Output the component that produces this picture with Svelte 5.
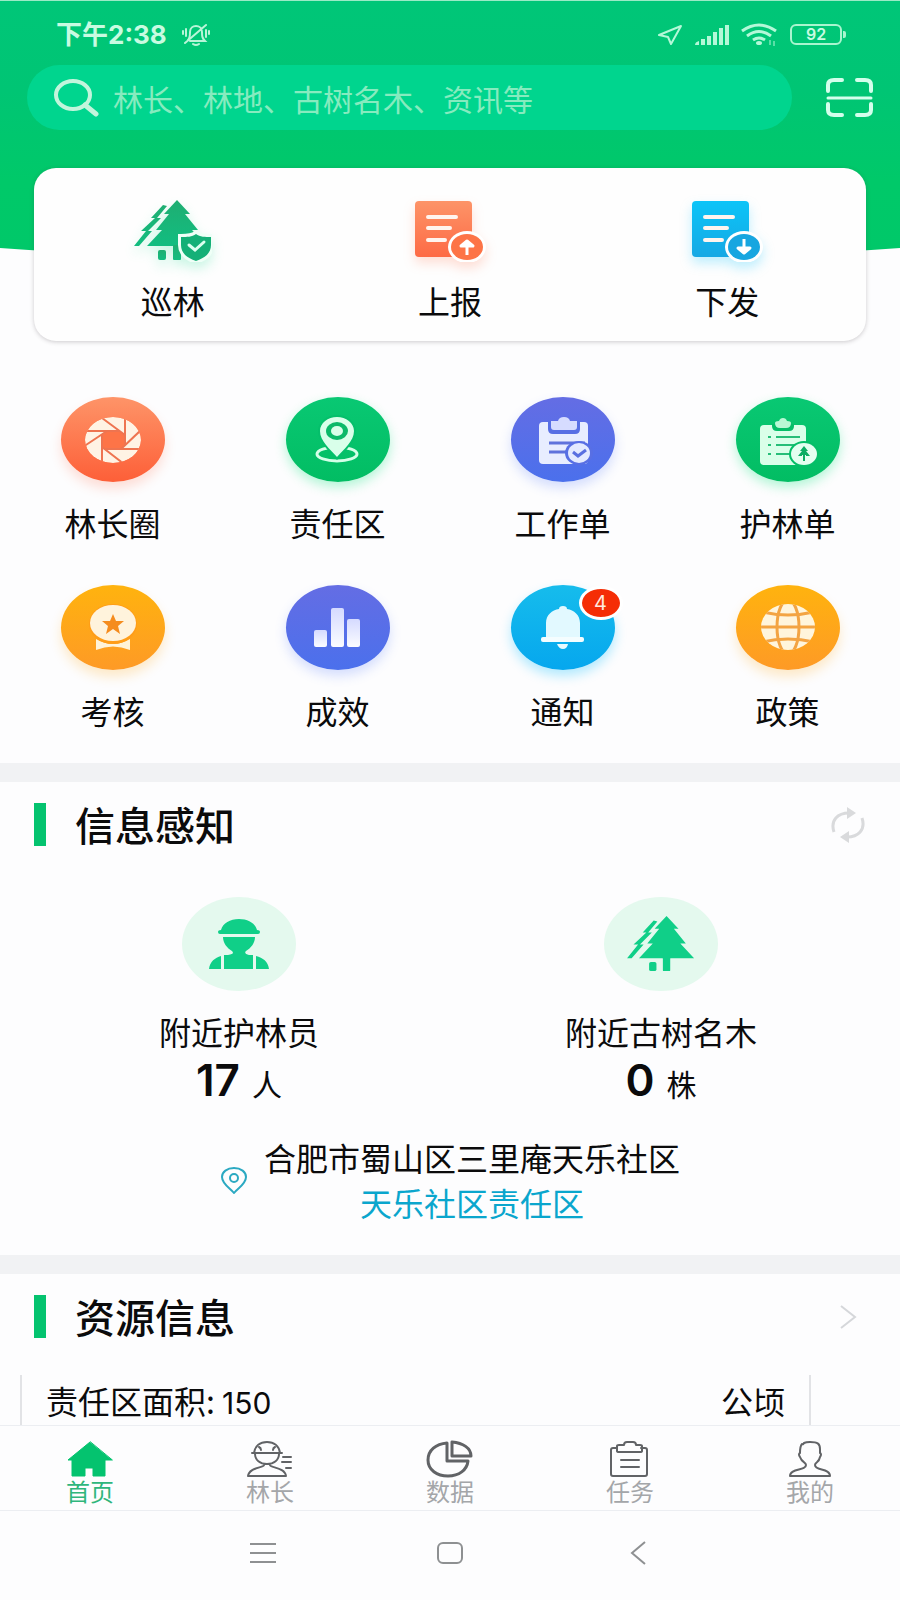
<script>
  const actions = [
    { id: 'patrol', label: '巡林' },
    { id: 'report', label: '上报' },
    { id: 'dispatch', label: '下发' }
  ];
  const services = [
    { id: 'circle', label: '林长圈', tone: 'coral' },
    { id: 'area', label: '责任区', tone: 'green' },
    { id: 'work', label: '工作单', tone: 'indigo' },
    { id: 'forest', label: '护林单', tone: 'green' },
    { id: 'assess', label: '考核', tone: 'amber' },
    { id: 'result', label: '成效', tone: 'indigo' },
    { id: 'notice', label: '通知', tone: 'blue', badge: 4 },
    { id: 'policy', label: '政策', tone: 'amber' }
  ];
  const stats = [
    { id: 'ranger', label: '附近护林员', value: 17, unit: '人' },
    { id: 'trees', label: '附近古树名木', value: 0, unit: '株' }
  ];
  const tabs = [
    { id: 'home', label: '首页', active: true },
    { id: 'chief', label: '林长' },
    { id: 'data', label: '数据' },
    { id: 'task', label: '任务' },
    { id: 'mine', label: '我的' }
  ];
</script>

{#snippet pines()}
  <path d="M29 5 17 18h4L7 31h5L0 46h5L18 31h-4L27 18h-4L33 6z" />
  <path d="M43 0 30 14h5L22 30h6L13 46h60L58 30h6L51 14h5z" />
  <rect x="24" y="50" width="8" height="10" rx="2" />
  <rect x="39" y="45" width="8" height="15" rx="1" />
{/snippet}

{#snippet actionIcon(id)}
  {#if id === 'patrol'}
    <svg class="glow-green" width="78" height="62" viewBox="0 0 78 62" aria-hidden="true">
      <defs>
        <linearGradient id="gPine" x1="0" y1="0" x2="0" y2="1">
          <stop offset="0" stop-color="#1fae72" /><stop offset="1" stop-color="#12bd80" />
        </linearGradient>
      </defs>
      <g fill="url(#gPine)">{@render pines()}</g>
      <path d="M62 34c4 3 9 3 15 3v8c0 8-6 13-15 16-9-3-15-8-15-16v-8c6 0 11 0 15-3z" fill="#14b077" stroke="#effff7" stroke-width="6" paint-order="stroke" />
      <path d="m55 45 6 5 9-8" fill="none" stroke="#dcfff0" stroke-width="3" stroke-linecap="round" />
    </svg>
  {:else}
    <svg class={id === 'report' ? 'glow-coral' : 'glow-blue'} width="72" height="62" viewBox="0 0 72 62" aria-hidden="true">
      <defs>
        <linearGradient id="gDoc-{id}" x1="0" y1="0" x2="0" y2="1">
          <stop offset="0" stop-color={id === 'report' ? '#fd9468' : '#0cc4f8'} />
          <stop offset="1" stop-color={id === 'report' ? '#fd6a45' : '#16a8e4'} />
        </linearGradient>
      </defs>
      <rect x="1" y="1" width="57" height="56" rx="4" fill="url(#gDoc-{id})" />
      <path d="M14 17h28M14 28h22M14 40h17" stroke="#fff4ee" stroke-width="4" stroke-linecap="round" />
      <ellipse cx="53" cy="47" rx="19" ry="16" fill="#fff" />
      <ellipse cx="53" cy="47" rx="16" ry="13" fill={id === 'report' ? '#fd7447' : '#17a6e0'} />
      {#if id === 'report'}
        <path d="M53 41v14M47 46l6-5 6 5z" fill="#fff" stroke="#fff" stroke-width="3" stroke-linejoin="round" />
      {:else}
        <path d="M53 39v14M47 48l6 5 6-5z" fill="#fff" stroke="#fff" stroke-width="3" stroke-linejoin="round" />
      {/if}
    </svg>
  {/if}
{/snippet}

{#snippet serviceIcon(id)}
  <svg width="104" height="85" viewBox="0 0 104 85" aria-hidden="true">
    {#if id === 'circle'}
      <clipPath id="lens"><ellipse cx="52" cy="43" rx="28" ry="23" /></clipPath>
      <g clip-path="url(#lens)">
        <ellipse cx="52" cy="43" rx="28" ry="23" fill="#fff3e4" />
        <path d="M46 34h12l6 4v10l-4 4H44l-3-2V38z" fill="#fd7447" />
        <path d="m41 21 23 17M64 18v30M80 33 60 52M82 52H44M63 67 41 50M41 68V38M22 50l24-16M22 34h36" fill="none" stroke="#ee7450" stroke-width="2" />
      </g>
    {:else if id === 'area'}
      <ellipse cx="51" cy="57" rx="20" ry="7" fill="none" stroke="#d4ffe8" stroke-width="3" />
      <path d="M51 60C44 52 34 44 34 34c0-8 8-14 17-14s17 6 17 14c0 10-10 18-17 26z" fill="#d9ffea" stroke="#05bf6b" stroke-width="4" paint-order="stroke" />
      <ellipse cx="51" cy="34" rx="11" ry="9" fill="#0bb969" />
      <ellipse cx="51" cy="34" rx="6" ry="5" fill="#d9ffea" />
    {:else if id === 'work'}
      <rect x="28" y="25" width="49" height="42" rx="4" fill="#e8edff" />
      <path d="M37 24v8q0 5 5 5h22q5 0 5-5v-8z" fill="#586fe4" />
      <path d="M40 24h7q1-4 6-4t6 4h7v6q0 3-3 3H43q-3 0-3-3z" fill="#d6dcff" />
      <path d="M38 46h36M38 55h22" stroke="#5f72dc" stroke-width="3" />
      <ellipse cx="68" cy="56" rx="14" ry="12" fill="#586fe4" />
      <ellipse cx="68" cy="56" rx="11" ry="10" fill="#e4eaff" />
      <path d="m62 55 5 4 8-6" fill="none" stroke="#5a70e0" stroke-width="3" />
    {:else if id === 'forest'}
      <rect x="24" y="28" width="46" height="40" rx="4" fill="#daffe9" />
      <path d="M36 27h22v2q0 5-5 5H41q-5 0-5-5z" fill="#05be68" />
      <path d="M39 26q0-2 4-2 1-3 4-3t4 3q4 0 4 2 0 5-5 5h-6q-5 0-5-5z" fill="#b9f8d5" />
      <path d="M40 40h24M40 48h20M40 57h14M32 40h3M32 48h3M32 57h3" stroke="#27be78" stroke-width="2" />
      <ellipse cx="68" cy="57" rx="15" ry="13" fill="#05be68" />
      <ellipse cx="68" cy="57" rx="13" ry="11" fill="#e4fff0" />
      <path d="m68 49-4 5h2l-4 5h4v-1h1v6h2v-6h1v1h4l-4-5h2z" fill="#0cad63" />
    {:else if id === 'assess'}
      <path d="M35 54q17 10 34 0v11q-17-7-34 0z" fill="#fff3d8" />
      <ellipse cx="52" cy="39" rx="24" ry="20" fill="#ff9d18" />
      <ellipse cx="52" cy="38" rx="23" ry="18" fill="#fff3dc" />
      <path d="m52 29 3 7h8l-6 5 2 8-7-5-7 5 2-8-6-5h8z" fill="#f58c1e" />
    {:else if id === 'result'}
      <defs>
        <linearGradient id="gBar" x1="0" y1="0" x2="0" y2="1">
          <stop offset="0" stop-color="#d5daff" /><stop offset="1" stop-color="#fbfcff" />
        </linearGradient>
      </defs>
      <g fill="url(#gBar)">
        <rect x="28" y="45" width="13" height="17" rx="2" />
        <rect x="45" y="23" width="13" height="39" rx="2" />
        <rect x="61" y="34" width="13" height="28" rx="2" />
      </g>
    {:else if id === 'notice'}
      <path d="M35 53V38c0-8 6-13 13-14q0-3 4-3t4 3c7 1 13 6 13 14v15z" fill="#e2f9ff" />
      <rect x="30" y="52" width="43" height="5" rx="2" fill="#f4fdff" />
      <path d="M46 59h11q-1 5-5 5t-6-5z" fill="#e8fbff" />
    {:else if id === 'policy'}
      <clipPath id="globe"><ellipse cx="52" cy="42" rx="27" ry="23" /></clipPath>
      <ellipse cx="52" cy="42" rx="27" ry="23" fill="#fff5dc" />
      <g fill="none" stroke="#f3a443" stroke-width="3" clip-path="url(#globe)">
        <ellipse cx="52" cy="42" rx="11" ry="27" />
        <path d="M24 42h56M26 27q26 6 52 0M26 57q26-6 52 0" />
      </g>
    {/if}
  </svg>
{/snippet}

{#snippet tabIcon(id)}
  <svg width="50" height="40" viewBox="0 0 50 40" fill="none" stroke="#616366" stroke-width="2" stroke-linejoin="round" stroke-linecap="round" aria-hidden="true">
    {#if id === 'home'}
      <path d="M25 2 3 20h4v16h13v-8h8v8h12V20h7z" fill="#04c36f" stroke="#04c36f" stroke-width="1" />
    {:else if id === 'chief'}
      <path d="M9 13C10 6 15 2 22 2s12 4 13 11M7 13h30M14 7q2 1 2 3M30 7q-2 1-2 3M10 14c0 6 5 10 12 10s12-4 12-10M19 25c0 3-15 2-16 11h38c-1-9-16-8-16-11M38 17h8M37 22h9M41 28h5" />
    {:else if id === 'data'}
      <path d="M22 3C11 4 3 10 3 20s9 16 20 16 19-6 20-15H22zM27 2v14h19C46 8 38 3 27 2z" stroke-width="3" />
    {:else if id === 'task'}
      <path d="M12 8H8q-2 0-2 2v24q0 2 2 2h32q2 0 2-2V10q0-2-2-2h-4M16 20h18M16 27h18" />
      <path d="M12 11V6q0-1 2-1h5q0-3 3-3h6q3 0 3 3h4q2 0 2 1v5q0 1-2 1H14q-2 0-2-1z" />
    {:else}
      <path d="M17 4q1 1 2-1 2-1 6-1c8 0 10 2 10 7v4q2 1 0 4c-1 6-5 5-5 8 0 6 15 3 15 11H5c0-8 16-5 16-11 0-3-4-2-6-8q-2-3 0-4C15 9 15 6 17 4z" />
    {/if}
  </svg>
{/snippet}

<div class="page">
  <header>
    <div class="status">
      <span class="time">下午2:38</span>
      <svg width="30" height="24" viewBox="0 0 30 24" fill="none" stroke="#b8f5d8" stroke-width="2" stroke-linecap="round" aria-hidden="true">
        <path d="M7 17c2-2 2-4 2-8 0-4 3-6 6-6s6 2 6 6c0 4 0 6 3 9H9M12 21q3 2 6 0M4 20 25 2M5 6v7M2 8v3M25 7v7M28 8v3" />
      </svg>
      <span class="spacer"></span>
      <div class="signals">
        <svg width="26" height="22" viewBox="0 0 26 22" fill="none" stroke="#b4f8d8" stroke-width="2" stroke-linejoin="round" aria-hidden="true">
          <path d="M24 2 2 11l9 2 3 7z" />
        </svg>
        <svg width="34" height="22" viewBox="0 0 34 22" fill="#b4f8d8" aria-hidden="true">
          <path d="M0 21q0-3 4-4v4zM6 15h4v6H6zM12 12h4v9h-4zM18 8h4v13h-4zM24 4h4v17h-4zM30 1h4v20h-4z" />
        </svg>
        <svg width="36" height="24" viewBox="0 0 36 24" fill="none" stroke="#b4f8d8" stroke-width="3" aria-hidden="true">
          <path d="M1 8q17-12 34 0M6 13q12-9 24 0M12 17q6-4 12 0" />
          <ellipse cx="18" cy="20" rx="3" ry="2" fill="#b4f8d8" stroke="none" />
          <path d="M29 17v5M33 18v5" stroke-width="1" />
        </svg>
        <span class="battery">92</span>
      </div>
    </div>
    <div class="search-row">
      <label class="search">
        <svg width="46" height="40" viewBox="0 0 46 40" fill="none" stroke="#c2f5dc" aria-hidden="true">
          <ellipse cx="20" cy="17" rx="17" ry="14" stroke-width="4" />
          <path d="m32 27 11 9" stroke-width="5" stroke-linecap="round" />
        </svg>
        <input type="search" aria-label="搜索" placeholder="林长、林地、古树名木、资讯等" />
      </label>
      <button aria-label="扫一扫">
        <svg width="47" height="40" viewBox="0 0 47 40" fill="none" stroke="#d3ffec" stroke-width="4" stroke-linecap="round" aria-hidden="true">
          <path d="M2 13V7q0-5 6-5h8M31 2h8q6 0 6 5v6M2 26v6q0 5 6 5h8M31 37h8q6 0 6-5v-6" />
          <path d="M2 20h43" stroke-width="3" />
        </svg>
      </button>
    </div>
  </header>

  <main>
    <section class="actions">
      {#each actions as a}
        <button>
          {@render actionIcon(a.id)}
          <span>{a.label}</span>
        </button>
      {/each}
    </section>

    <section class="services">
      {#each services as s}
        <button>
          <span class="disc {s.tone}">
            {@render serviceIcon(s.id)}
            {#if s.badge}<span class="badge">{s.badge}</span>{/if}
          </span>
          <span>{s.label}</span>
        </button>
      {/each}
    </section>

    <section class="block">
      <div class="heading">
        <h2>信息感知</h2>
        <button aria-label="刷新">
          <svg width="36" height="36" viewBox="0 0 36 36" fill="none" stroke="#d9dadc" stroke-width="3" aria-hidden="true">
            <path d="M4 25C0 13 8 6 19 6M32 11c4 12-4 19-15 19" />
            <path d="m17 0 9 6-9 6zM19 24l-9 6 9 6z" fill="#d9dadc" stroke="none" />
          </svg>
        </button>
      </div>
      <div class="stats">
        {#each stats as s}
          <div class="stat">
            <span class="halo">
              {#if s.id === 'ranger'}
                <svg width="60" height="50" viewBox="0 0 60 50" fill="#10cf88" aria-hidden="true">
                  <path d="M12 11C14 4 21 0 30 0s16 4 18 11q3 0 3 2t-2 2H11q-2 0-2-2t3-2zM14 18h32c0 6-4 11-9 14-2 2 0 3 3 4h4v14H15V36h4c5-1 6-2 4-4-5-3-9-8-9-14zM12 37v13H0c1-8 6-11 12-13zM47 37c7 2 12 5 13 13H47V37z" />
                </svg>
              {:else}
                <svg width="69" height="56" viewBox="0 0 75 61" fill="#10cf88" aria-hidden="true">{@render pines()}</svg>
              {/if}
            </span>
            <span>{s.label}</span>
            <div class="figure"><strong>{s.value}</strong><span>{s.unit}</span></div>
          </div>
        {/each}
      </div>
      <div class="place">
        <svg width="28" height="28" viewBox="0 0 28 28" fill="none" stroke="#2ba9c2" stroke-width="2" stroke-linejoin="round" aria-hidden="true">
          <path d="M14 27C10 22 2 18 2 11c0-5 5-9 12-9s12 4 12 9c0 7-8 11-12 16z" />
          <circle cx="14" cy="12" r="4" />
        </svg>
        <div class="address">
          <span>合肥市蜀山区三里庵天乐社区</span>
          <a href="#area">天乐社区责任区</a>
        </div>
      </div>
    </section>

    <section class="block">
      <div class="heading">
        <h2>资源信息</h2>
        <button class="more" aria-label="更多">
          <svg width="18" height="26" viewBox="0 0 18 26" fill="none" stroke="#d5d7da" stroke-width="2" aria-hidden="true">
            <path d="m2 2 14 11L2 24" />
          </svg>
        </button>
      </div>
      <div class="resource">
        <span>责任区面积: <span class="number">150</span></span>
        <span>公顷</span>
      </div>
    </section>
  </main>

  <nav class="tabs">
    {#each tabs as t}
      <a href="#{t.id}" class:active={t.active}>
        {@render tabIcon(t.id)}
        <span>{t.label}</span>
      </a>
    {/each}
  </nav>

  <div class="system">
    <button aria-label="菜单">
      <svg width="26" height="22" viewBox="0 0 26 22" stroke="#8e9092" stroke-width="2" aria-hidden="true"><path d="M0 2h26M0 11h26M0 20h26" /></svg>
    </button>
    <button aria-label="主屏幕">
      <svg width="28" height="24" viewBox="0 0 28 24" fill="none" stroke="#8e9092" stroke-width="2" aria-hidden="true"><rect x="2" y="2" width="24" height="20" rx="5" /></svg>
    </button>
    <button aria-label="返回">
      <svg width="26" height="24" viewBox="0 0 26 24" fill="none" stroke="#8e9092" stroke-width="2" aria-hidden="true"><path d="M21 1 8 12l13 11" /></svg>
    </button>
  </div>
</div>

<style>
  :global(body) {
    margin: 0;
    background: #fdfdfe;
  }
  .page {
    display: flex;
    flex-direction: column;
    min-height: 100vh;
    font-family: 'Noto Sans CJK SC', sans-serif;
    font-size: 32px;
    line-height: 36px;
    color: #0b0b0c;
    background: #fdfdfe;
  }
  button {
    margin: 0;
    padding: 0;
    border: 0;
    background: none;
    font: inherit;
    color: inherit;
  }
  a {
    text-decoration: none;
  }
  svg {
    display: block;
    flex: none;
  }

  header {
    box-sizing: border-box;
    height: 263px;
    border-top: 1px solid #9beac6;
    background: linear-gradient(#00c678 0, #00c574 90px, #00c969 180px, #00c869);
    clip-path: ellipse(150% 100% at 50% 0);
  }
  .status {
    box-sizing: border-box;
    display: flex;
    align-items: center;
    gap: 14px;
    height: 64px;
    padding: 3px 53px 0 56px;
    color: #c8fbe1;
  }
  .time {
    font-family: Inter, 'Noto Sans CJK SC', sans-serif;
    font-size: 26px;
    font-weight: 700;
  }
  .spacer {
    flex: 1;
  }
  .signals {
    display: flex;
    align-items: center;
    gap: 12px;
  }
  .battery {
    position: relative;
    box-sizing: border-box;
    width: 52px;
    height: 21px;
    margin: 0 5px 0 1px;
    border: 2px solid #a9f5cf;
    border-radius: 6px;
    font-family: Inter, sans-serif;
    font-size: 16px;
    font-weight: 600;
    line-height: 17px;
    text-align: center;
  }
  .battery::after {
    content: '';
    position: absolute;
    top: 5px;
    right: -6px;
    width: 3px;
    height: 7px;
    border-radius: 0 2px 2px 0;
    background: #a9f5cf;
  }
  .search-row {
    display: flex;
    align-items: center;
    gap: 34px;
    padding: 0 27px;
  }
  .search {
    display: flex;
    flex: 1;
    align-items: center;
    gap: 14px;
    height: 65px;
    padding: 0 26px;
    border-radius: 33px;
    background: #00d58e;
  }
  .search input {
    flex: 1;
    min-width: 0;
    padding: 0;
    border: 0;
    outline: 0;
    background: none;
    font: inherit;
    font-size: 30px;
    color: #fff;
  }
  .search input::placeholder {
    color: #86ebbf;
    opacity: 1;
  }

  main {
    flex: 1;
    position: relative;
    margin-top: -95px;
  }
  .actions {
    display: grid;
    grid-template-columns: repeat(3, 1fr);
    margin: 0 34px;
    padding: 32px 0 23px;
    border-radius: 22px;
    background: #fefefe;
    box-shadow: 0 1px 4px rgba(60, 50, 60, 0.25);
  }
  .actions button,
  .services button {
    display: flex;
    flex-direction: column;
    align-items: center;
    gap: 20px;
  }
  .services button {
    gap: 22px;
  }
  .glow-green {
    filter: drop-shadow(0 6px 6px rgba(20, 220, 140, 0.22));
  }
  .glow-coral {
    filter: drop-shadow(0 6px 6px rgba(255, 110, 70, 0.22));
  }
  .glow-blue {
    filter: drop-shadow(0 6px 6px rgba(0, 190, 250, 0.25));
  }
  .services {
    display: grid;
    grid-template-columns: repeat(4, 1fr);
    row-gap: 45px;
    padding: 56px 0 35px;
  }
  .disc {
    position: relative;
    width: 104px;
    height: 85px;
    border-radius: 50%;
  }
  .coral {
    background: linear-gradient(#fe9468, #fd5f38);
    box-shadow: 0 7px 12px rgba(253, 100, 60, 0.2);
  }
  .green {
    background: linear-gradient(#09c873, #02bd63);
    box-shadow: 0 5px 12px rgba(0, 230, 120, 0.3);
  }
  .indigo {
    background: linear-gradient(#646de4, #4b70ec);
    box-shadow: 0 6px 12px rgba(70, 110, 250, 0.22);
  }
  .amber {
    background: linear-gradient(#ffb30e, #fe9a26);
    box-shadow: 0 7px 12px rgba(255, 170, 30, 0.24);
  }
  .blue {
    background: linear-gradient(#16bcec, #06a7ee);
    box-shadow: 0 6px 12px rgba(0, 190, 255, 0.3);
  }
  .badge {
    position: absolute;
    top: 1px;
    right: -8px;
    width: 38px;
    height: 28px;
    border: 3px solid #fff;
    border-radius: 50%;
    background: #f52d05;
    color: #ffe9df;
    font-family: Inter, sans-serif;
    font-size: 20px;
    line-height: 28px;
    text-align: center;
  }

  .block {
    border-top: 19px solid #f1f2f4;
  }
  .heading {
    display: flex;
    align-items: center;
    justify-content: space-between;
    padding: 21px 34px 0;
  }
  h2 {
    margin: 0;
    padding-left: 29px;
    border-left: 12px solid #04c36f;
    font-size: 40px;
    font-weight: 500;
    line-height: 43px;
  }
  .more {
    padding-right: 9px;
  }
  .stats {
    display: grid;
    grid-template-columns: 1fr 1fr;
    padding: 51px 28px 0;
  }
  .stat {
    display: flex;
    flex-direction: column;
    align-items: center;
  }
  .halo {
    display: flex;
    align-items: center;
    justify-content: center;
    width: 114px;
    height: 94px;
    margin-bottom: 22px;
    border-radius: 50%;
    background: #e4f9ee;
  }
  .figure {
    display: flex;
    align-items: baseline;
    gap: 12px;
    margin-top: 5px;
    line-height: 52px;
  }
  .figure strong {
    font-family: Inter, sans-serif;
    font-size: 44px;
    font-weight: 600;
  }
  .figure span {
    font-size: 30px;
  }
  .place {
    display: flex;
    align-items: center;
    justify-content: center;
    gap: 16px;
    padding: 26px 0 30px;
    line-height: 45px;
  }
  .address {
    display: flex;
    flex-direction: column;
    align-items: center;
  }
  .address a {
    color: #0aa6cd;
  }
  .resource {
    display: flex;
    justify-content: space-between;
    margin: 37px 89px 0 20px;
    padding: 0 24px;
    border: solid #e2e3e6;
    border-width: 0 2px;
    line-height: 50px;
  }
  .number {
    font-family: Inter, sans-serif;
    font-size: 30px;
    line-height: 30px;
  }

  .tabs {
    display: grid;
    grid-template-columns: repeat(5, 1fr);
    border: solid #eceef2;
    border-width: 1px 0;
    background: #fdfdfe;
  }
  .tabs a {
    display: flex;
    flex-direction: column;
    align-items: center;
    padding: 14px 0 8px;
    color: #a4a6a9;
    font-size: 24px;
    line-height: 22px;
  }
  .tabs a.active {
    color: #2fb67c;
  }
  .system {
    display: flex;
    align-items: center;
    justify-content: center;
    gap: 160px;
    height: 84px;
    padding-bottom: 5px;
  }
</style>
